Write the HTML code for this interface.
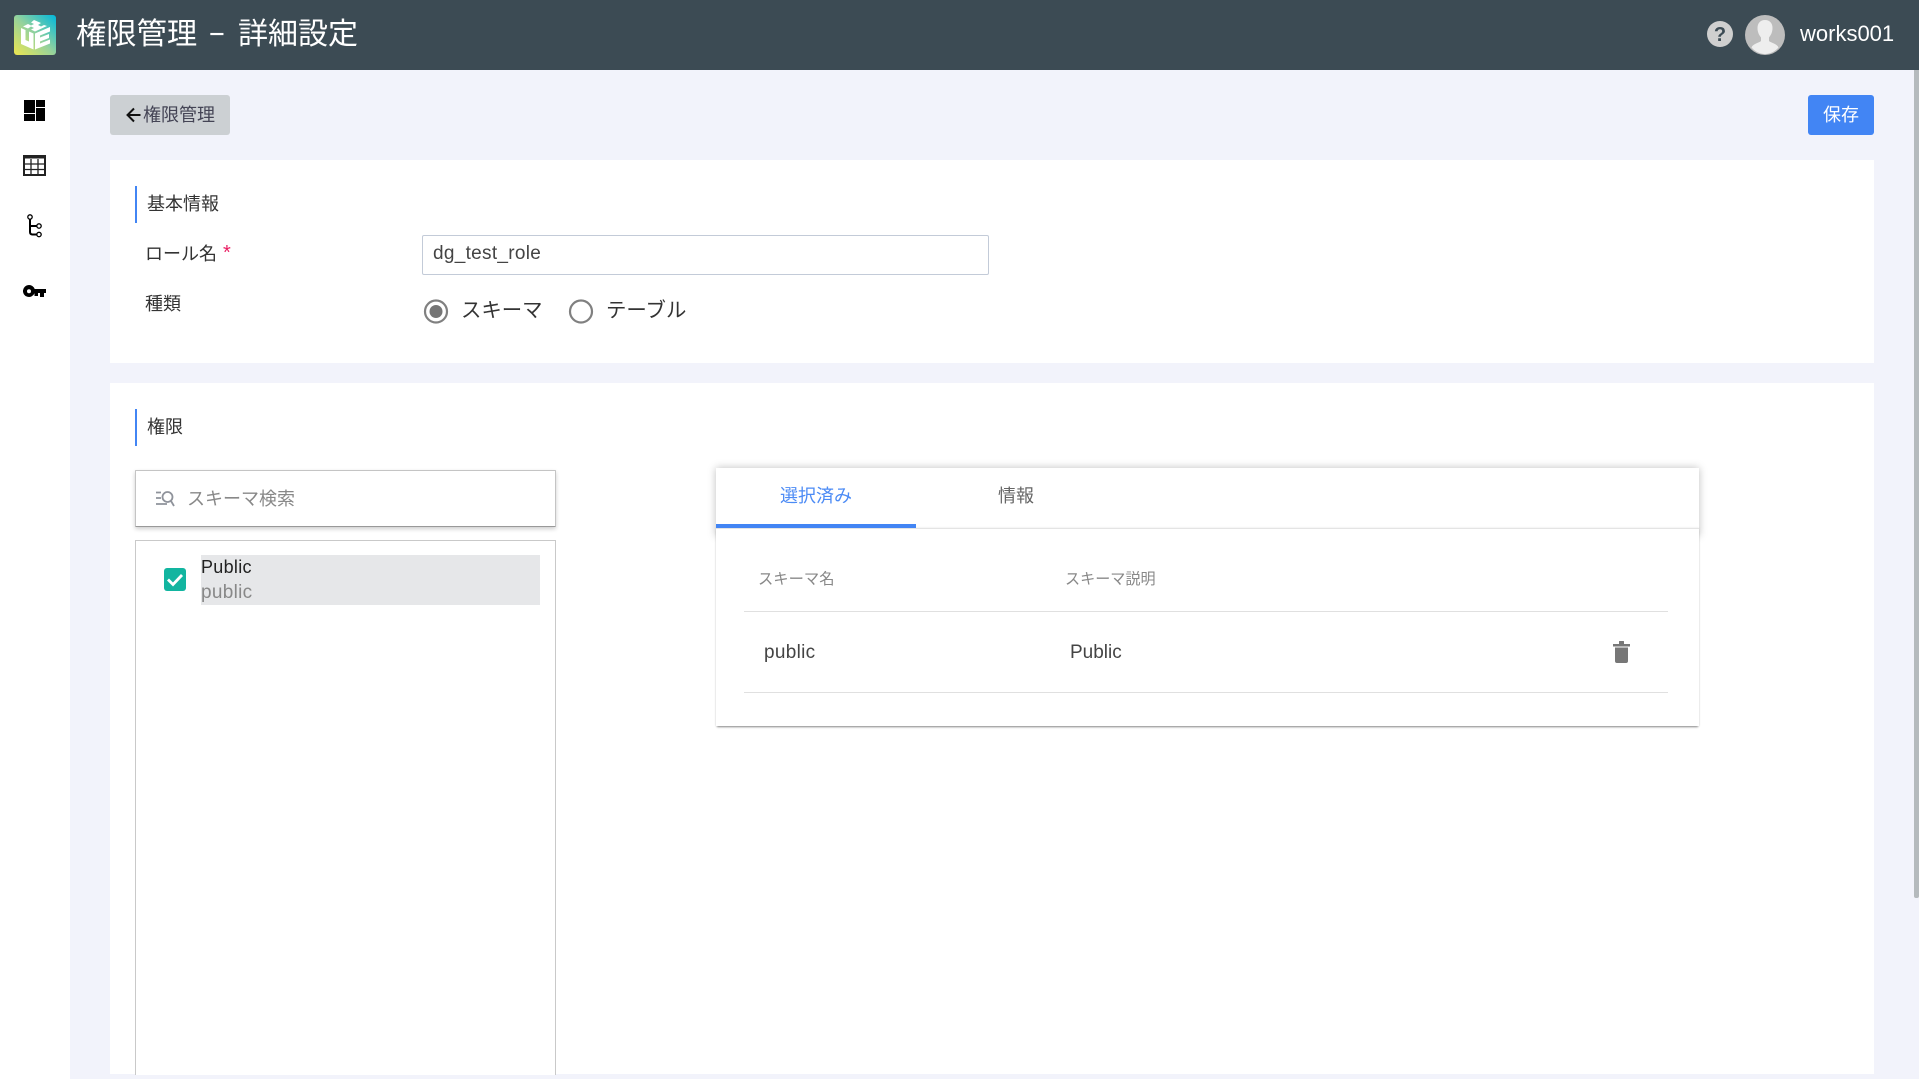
<!DOCTYPE html>
<html lang="ja">
<head>
<meta charset="utf-8">
<title>権限管理 - 詳細設定</title>
<style>
html,body{margin:0;padding:0;width:1919px;height:1079px;overflow:hidden;background:#f2f3fb;}
body{position:relative;font-family:"Liberation Sans","Noto Sans CJK JP",sans-serif;color:#333;}
.a{position:absolute;}
.t{position:absolute;white-space:nowrap;line-height:30px;height:30px;font-size:18px;}
svg{position:absolute;display:block;}
</style>
</head>
<body>
<!-- header -->
<div class="a" style="left:0;top:0;width:1919px;height:70px;background:#3c4b54;"></div>
<svg style="left:14px;top:15px" width="42" height="40" viewBox="0 0 42 40">
  <defs><linearGradient id="g" x1="0" y1="1" x2="1" y2="0"><stop offset="0" stop-color="#eee64f"/><stop offset=".5" stop-color="#95d29c"/><stop offset="1" stop-color="#00b7dc"/></linearGradient></defs>
  <rect width="42" height="40" rx="3" fill="url(#g)"/>
  <path fill="#fff" d="M7 13 L11.500 15 L11.500 25 L15 26.500 L15 16.500 L19.500 18.500 L19.500 34.500 L7 29Z"/>
  <path fill="#fff" d="M21 18.500 L36 12 L36 16.500 L26 20.500 L26 22.500 L35 19 L35 23 L26 26.500 L26 28.500 L36 24.500 L36 28.500 L21 34.500Z"/>
  <path fill="#fff" d="M9 11.500 L14 9 L17 10.500 L20 9 L17 7.500 L20 5 L27 8 L24 10 L27 11.500 L30 10 L33 11 L21 16.500 L17 14.500 L20 13 L17 11.500 L14 13.500Z"/>
</svg>
<div class="t" style="left:76px;top:17px;height:36px;line-height:36px;font-size:30.300px;color:#fff;">権限管理</div>
<div class="t" style="left:209px;top:17px;height:36px;line-height:36px;font-size:30px;color:#fff;transform:scaleX(.9);transform-origin:left;">−</div>
<div class="t" style="left:238px;top:17px;height:36px;line-height:36px;font-size:30px;color:#fff;">詳細設定</div>
<svg style="left:1707px;top:21px" width="26" height="26" viewBox="0 0 26 26"><circle cx="13" cy="13" r="13" fill="#cfcfcf"/><text x="13" y="20" text-anchor="middle" font-family="Liberation Sans" font-weight="700" font-size="20" fill="#3c4b54">?</text></svg>
<svg style="left:1745px;top:15px" width="40" height="40" viewBox="0 0 40 40"><circle cx="20" cy="20" r="20" fill="#bdbdbd"/><path fill="#eee" d="M20 5c-5 0-7.500 3.500-7.500 8 0 4 1.500 7 3.500 9.500v3.500c-2 2-8 2.500-9.500 6.500 3 3.500 8 6.500 13.500 6.500s10.500-3 13.500-6.500c-1.500-4-7.500-4.500-9.500-6.500v-3.500c2-2.500 3.500-5.500 3.500-9.500 0-4.500-2.500-8-7.500-8z"/></svg>
<div class="t" style="left:1800px;top:19px;font-size:22px;color:#fff;">works001</div>

<!-- sidebar -->
<div class="a" style="left:0;top:70px;width:70px;height:1009px;background:#fff;"></div>
<svg style="left:24px;top:100px" width="21" height="21" viewBox="0 0 21 21"><path d="M0 0h11v13H0zM12 0h9v7h-9zM12 8h9v13h-9zM0 14h11v7H0z" fill="#000"/></svg>
<svg style="left:23px;top:155px" width="23" height="21" viewBox="0 0 23 21"><rect x="1" y="1" width="21" height="19" fill="none" stroke="#222" stroke-width="2"/><path d="M1 2.500h21" stroke="#222" stroke-width="2"/><path d="M1 9h21M1 14.500h21M8 4v16M15 4v16" stroke="#222" stroke-width="1.300" fill="none"/></svg>
<svg style="left:26px;top:214px" width="18" height="24" viewBox="0 0 18 24"><path d="M4 5V18q0 2.500 2.500 2.500H11M4 12H11" fill="none" stroke="#000" stroke-width="2"/><circle cx="4" cy="3" r="2.200" fill="#fff" stroke="#000" stroke-width="1.300"/><circle cx="13" cy="12" r="2.200" fill="#fff" stroke="#000" stroke-width="1.300"/><circle cx="13" cy="20.500" r="2.200" fill="#fff" stroke="#000" stroke-width="1.300"/></svg>
<svg style="left:23px;top:285px" width="23" height="13" viewBox="0 0 23 13"><path fill-rule="evenodd" d="M6 0a6 6 0 0 1 5.700 4H23v4h-2v4h-4V8h-2v3h-3.500V8.300A6 6 0 1 1 6 0zM6 4.200a2 2 0 1 0 0 4 2 2 0 0 0 0-4z" fill="#000"/></svg>

<!-- scrollbar -->
<div class="a" style="left:1914px;top:70px;width:5px;height:828px;background:#b5babd;border-radius:0 0 2px 2px;"></div>

<!-- top buttons -->
<div class="a" style="left:110px;top:95px;width:120px;height:40px;background:#ccd0d3;border-radius:3px;"></div>
<svg style="left:126px;top:107px" width="15" height="16" viewBox="0 0 15 16"><path d="M14.500 8H2M8 1.500 1.500 8 8 14.500" fill="none" stroke="#111" stroke-width="2"/></svg>
<div class="t" style="left:143px;top:100px;color:#445;">権限管理</div>
<div class="a" style="left:1808px;top:95px;width:66px;height:40px;background:#4285f4;border-radius:3px;"></div>
<div class="t" style="left:1823px;top:100px;color:#fff;">保存</div>

<!-- card 1 -->
<div class="a" style="left:110px;top:160px;width:1764px;height:203px;background:#fff;"></div>
<div class="a" style="left:135px;top:186px;width:2px;height:37px;background:#4285f4;"></div>
<div class="t" style="left:147px;top:189px;color:#333;">基本情報</div>
<div class="t" style="left:145px;top:239px;color:#333;">ロール名</div>
<div class="t" style="left:223px;top:238px;color:#e91e63;font-size:20px;">*</div>
<div class="a" style="left:422px;top:235px;width:565px;height:38px;border:1px solid #c3cbd8;border-radius:2px;background:#fff;"></div>
<div class="t" style="left:433px;top:239px;color:#444;font-size:19px;letter-spacing:.3px;">dg_test_role</div>
<div class="t" style="left:145px;top:289px;color:#333;">種類</div>
<svg style="left:423px;top:299px" width="26" height="25" viewBox="0 0 26 25"><circle cx="13" cy="12.500" r="11" fill="#fff" stroke="#808080" stroke-width="2.200"/><circle cx="13" cy="12.500" r="6.500" fill="#757575"/></svg>
<div class="t" style="left:461px;top:296px;font-size:20.400px;color:#333;">スキーマ</div>
<svg style="left:568px;top:299px" width="26" height="25" viewBox="0 0 26 25"><circle cx="13" cy="12.500" r="11" fill="#fff" stroke="#808080" stroke-width="2.200"/></svg>
<div class="t" style="left:606px;top:296px;font-size:20.400px;color:#333;">テーブル</div>

<!-- card 2 -->
<div class="a" style="left:110px;top:383px;width:1764px;height:691px;background:#fff;"></div>
<div class="a" style="left:135px;top:409px;width:2px;height:37px;background:#4285f4;"></div>
<div class="t" style="left:147px;top:412px;color:#333;">権限</div>

<!-- search -->
<div class="a" style="left:135px;top:470px;width:419px;height:55px;border:1px solid #c4c4c4;border-bottom-color:#999;background:#fff;box-shadow:0 2px 4px rgba(0,0,0,.2);border-radius:1px;"></div>
<svg style="left:155px;top:490px" width="20" height="17" viewBox="0 0 20 17"><path d="M1 2.500h5M1 8h5M1 14h11" stroke="#8f939b" stroke-width="1.800" fill="none"/><circle cx="12.500" cy="7" r="5" fill="none" stroke="#8f939b" stroke-width="1.800"/><path d="M16 11l3 5" stroke="#8f939b" stroke-width="1.800"/></svg>
<div class="t" style="left:187px;top:484px;color:#888;">スキーマ検索</div>

<!-- list -->
<div class="a" style="left:135px;top:540px;width:419px;height:534px;border:1px solid #c9c9c9;border-bottom:0;background:#fff;"></div>
<div class="a" style="left:201px;top:555px;width:339px;height:50px;background:#e6e7e9;"></div>
<div class="a" style="left:164px;top:568px;width:22px;height:23px;background:#12b5a0;border-radius:3px;"></div>
<svg style="left:164px;top:568px" width="22" height="23" viewBox="0 0 22 23"><path d="M4 11.500l5 5L18 7" fill="none" stroke="#fff" stroke-width="2.800"/></svg>
<div class="t" style="left:201px;top:552px;color:#222;letter-spacing:.3px;">Public</div>
<div class="t" style="left:201px;top:578px;color:#888;font-size:19px;letter-spacing:.3px;">public</div>

<!-- right panel -->
<div class="a" style="left:716px;top:468px;width:983px;height:68px;background:#fff;box-shadow:0 0 8px rgba(0,0,0,.26);"></div>
<div class="a" style="left:716px;top:528px;width:983px;height:198px;background:#fff;box-shadow:0 2px 2px -1px rgba(0,0,0,.45),0 0 2px rgba(0,0,0,.12);"></div>
<div class="a" style="left:716px;top:528px;width:983px;height:1px;background:#e4e4e4;"></div>
<div class="a" style="left:716px;top:524px;width:200px;height:4px;background:#4285f4;"></div>
<div class="t" style="left:780px;top:481px;color:#4c8bf5;">選択済み</div>
<div class="t" style="left:998px;top:481px;color:#666;">情報</div>
<div class="t" style="left:758px;top:565px;font-size:15.300px;color:#888;">スキーマ名</div>
<div class="t" style="left:1065px;top:565px;font-size:15.100px;color:#888;">スキーマ説明</div>
<div class="a" style="left:744px;top:611px;width:924px;height:1px;background:#e0e0e0;"></div>
<div class="t" style="left:764px;top:638px;color:#444;font-size:19px;letter-spacing:.3px;">public</div>
<div class="t" style="left:1070px;top:638px;color:#444;font-size:19px;">Public</div>
<svg style="left:1613px;top:641px" width="17" height="22" viewBox="0 0 17 22"><path fill="#777" d="M0 3h6V.5q0-.5.500-.5h4q.5 0 .5.500V3h6v2.500H0zM2 6.500h13V20q0 2-2 2H4q-2 0-2-2z"/></svg>
<div class="a" style="left:744px;top:692px;width:924px;height:1px;background:#e0e0e0;"></div>
</body>
</html>
